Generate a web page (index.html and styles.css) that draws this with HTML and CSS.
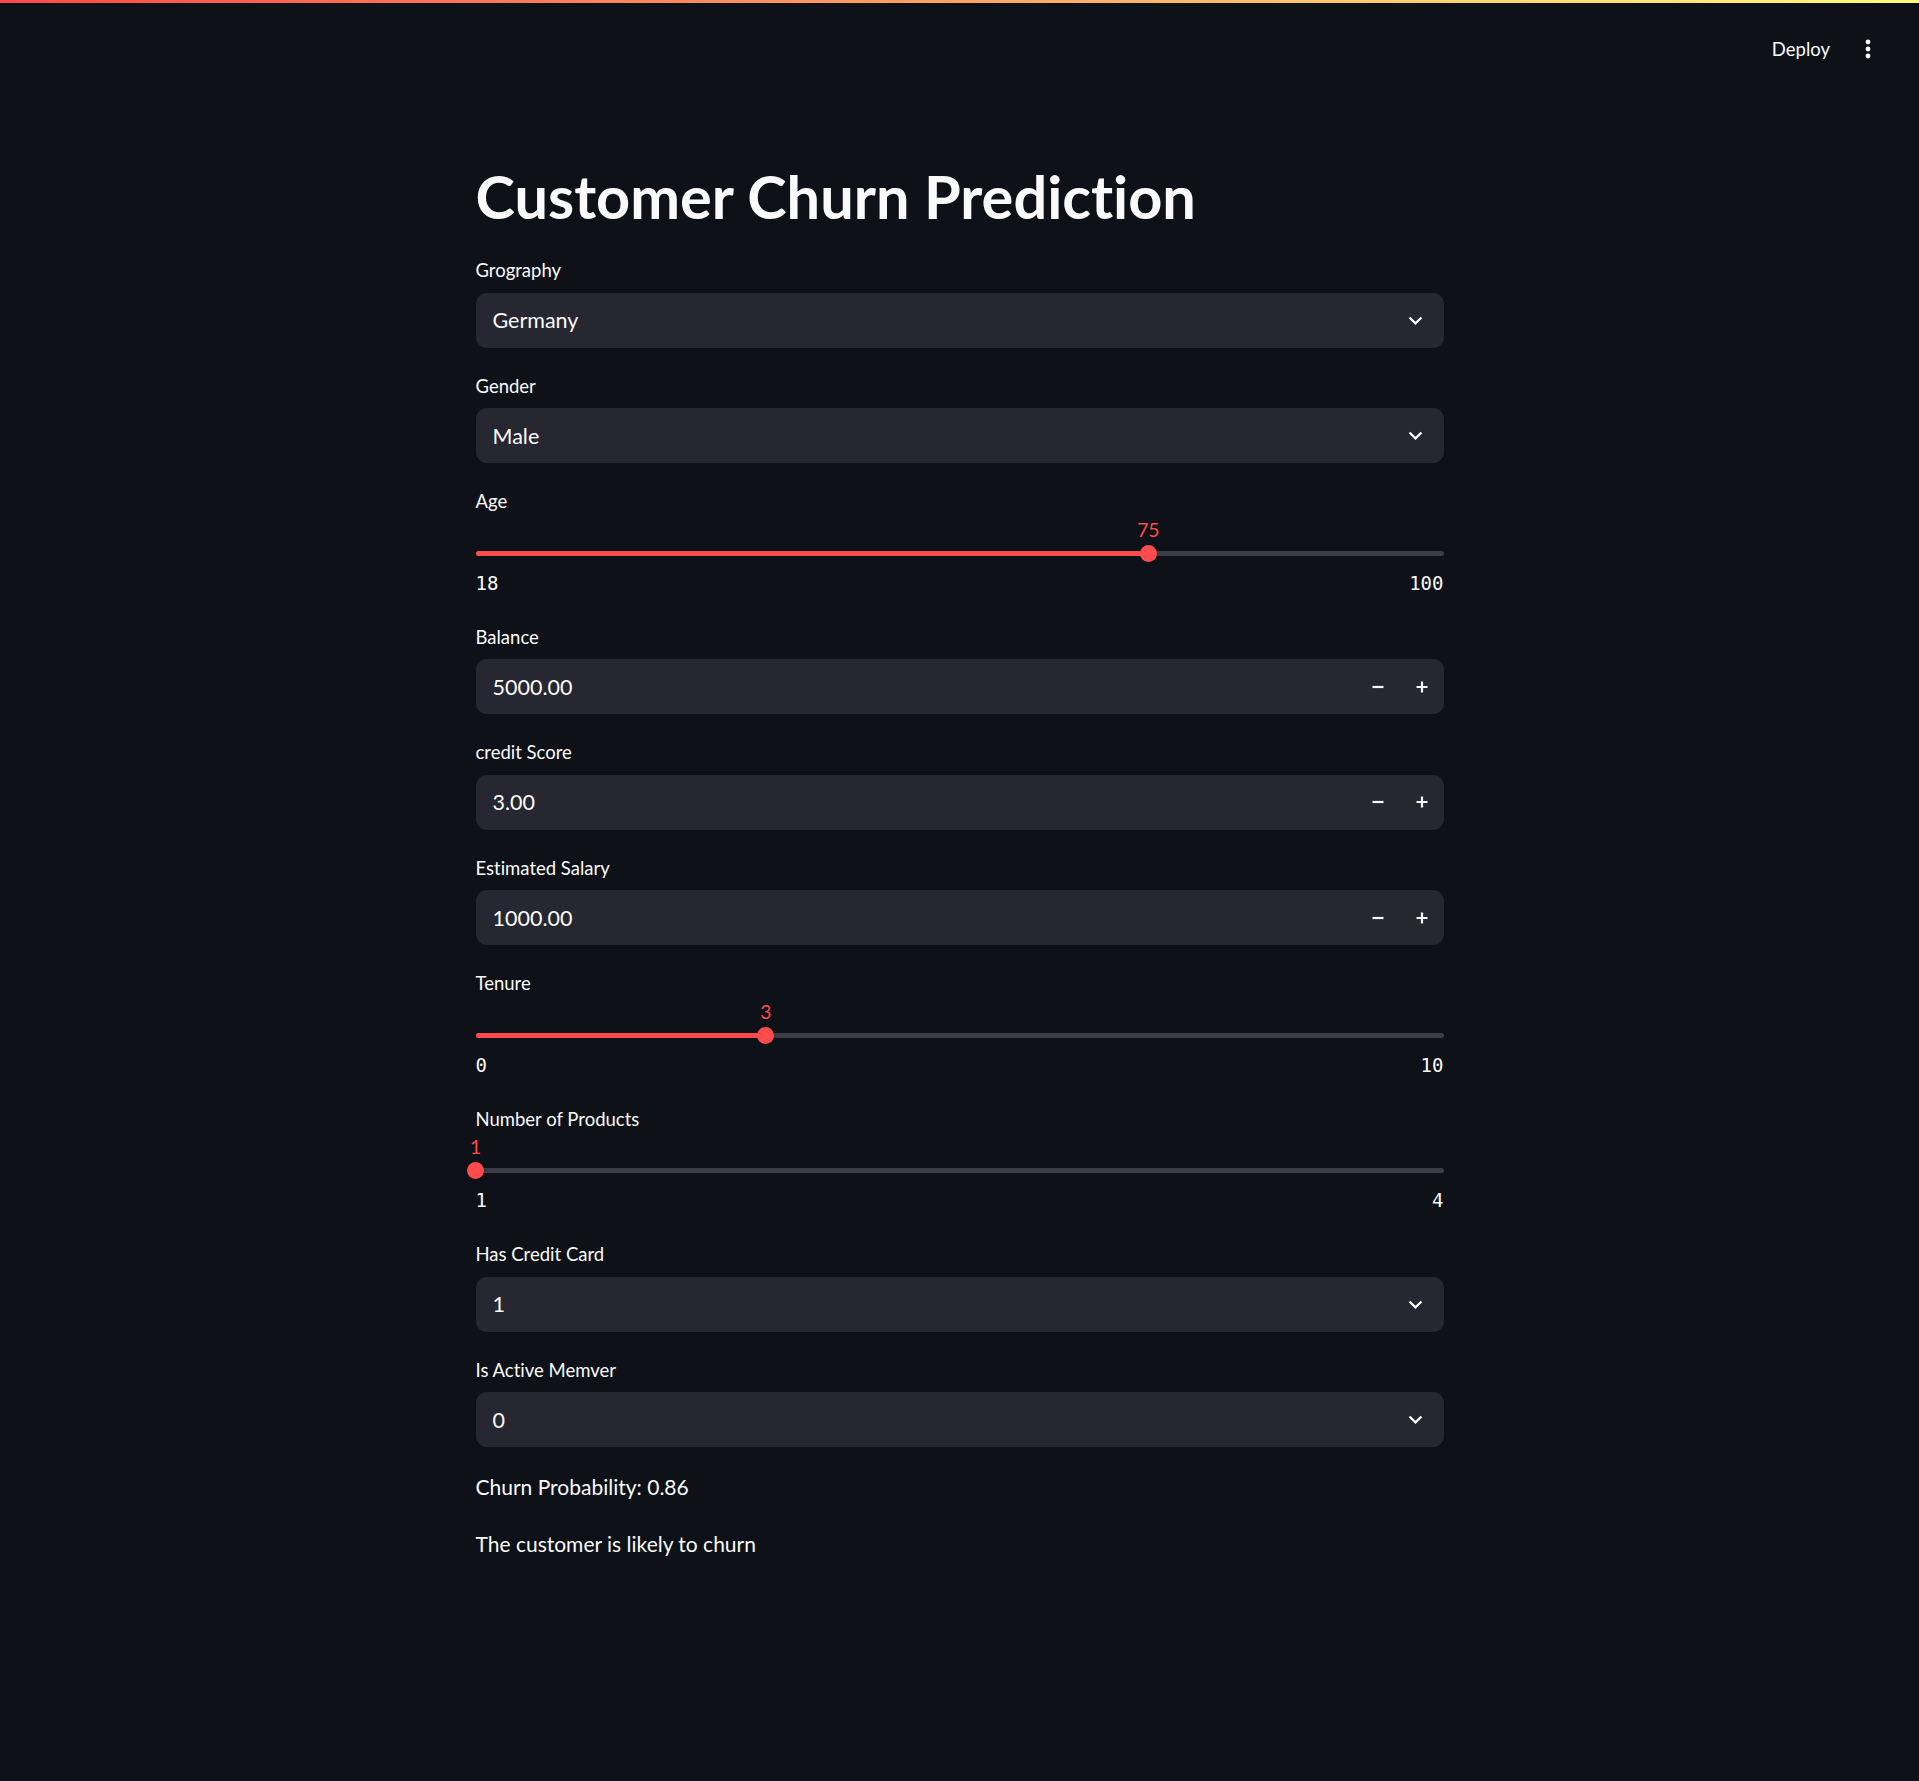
FILE: index.html
```html
<!DOCTYPE html>
<html lang="en">
<head>
<meta charset="utf-8">
<title>Customer Churn Prediction</title>
<link rel="stylesheet" href="styles.css">
</head>
<body>
<div class="decoration"></div>
<header class="header">
  <span class="deploy">Deploy</span>
  <span class="menu">
    <svg width="8" height="22" viewBox="0 0 8 22"><circle cx="4" cy="4" r="2.4" fill="#fafafa"/><circle cx="4" cy="11" r="2.4" fill="#fafafa"/><circle cx="4" cy="18" r="2.4" fill="#fafafa"/></svg>
  </span>
</header>
<main class="main">
  <h1 class="title">Customer Churn Prediction</h1>
  <div class="stack">
    <div class="field">
      <div class="label">Grography</div>
      <div class="box select"><span class="value">Germany</span>
        <svg class="chev" width="27" height="27" viewBox="0 0 24 24"><path d="M16.59 8.59L12 13.17 7.41 8.59 6 10l6 6 6-6z" fill="#fafafa"/></svg></div>
    </div>
    <div class="field">
      <div class="label">Gender</div>
      <div class="box select"><span class="value">Male</span>
        <svg class="chev" width="27" height="27" viewBox="0 0 24 24"><path d="M16.59 8.59L12 13.17 7.41 8.59 6 10l6 6 6-6z" fill="#fafafa"/></svg></div>
    </div>
    <div class="field">
      <div class="label">Age</div>
      <div class="slider">
        <div class="track">
          <div class="fill" style="width:69.51%"></div>
          <div class="thumb" style="left:69.51%"><span class="thumb-value">75</span></div>
        </div>
        <div class="ticks"><span>18</span><span>100</span></div>
      </div>
    </div>
    <div class="field">
      <div class="label">Balance</div>
      <div class="box number"><span class="value">5000.00</span>
        <span class="step"><svg width="12" height="12" viewBox="0 0 12 12"><path d="M0.5 6h11" stroke="#fafafa" stroke-width="2.2"/></svg></span>
        <span class="step"><svg width="12" height="12" viewBox="0 0 12 12"><path d="M0.5 6h11M6 0.5v11" stroke="#fafafa" stroke-width="2.2"/></svg></span>
      </div>
    </div>
    <div class="field">
      <div class="label">credit Score</div>
      <div class="box number"><span class="value">3.00</span>
        <span class="step"><svg width="12" height="12" viewBox="0 0 12 12"><path d="M0.5 6h11" stroke="#fafafa" stroke-width="2.2"/></svg></span>
        <span class="step"><svg width="12" height="12" viewBox="0 0 12 12"><path d="M0.5 6h11M6 0.5v11" stroke="#fafafa" stroke-width="2.2"/></svg></span>
      </div>
    </div>
    <div class="field">
      <div class="label">Estimated Salary</div>
      <div class="box number"><span class="value">1000.00</span>
        <span class="step"><svg width="12" height="12" viewBox="0 0 12 12"><path d="M0.5 6h11" stroke="#fafafa" stroke-width="2.2"/></svg></span>
        <span class="step"><svg width="12" height="12" viewBox="0 0 12 12"><path d="M0.5 6h11M6 0.5v11" stroke="#fafafa" stroke-width="2.2"/></svg></span>
      </div>
    </div>
    <div class="field">
      <div class="label">Tenure</div>
      <div class="slider">
        <div class="track">
          <div class="fill" style="width:30%"></div>
          <div class="thumb" style="left:30%"><span class="thumb-value">3</span></div>
        </div>
        <div class="ticks"><span>0</span><span>10</span></div>
      </div>
    </div>
    <div class="field">
      <div class="label">Number of Products</div>
      <div class="slider">
        <div class="track">
          <div class="fill" style="width:0%"></div>
          <div class="thumb" style="left:0%"><span class="thumb-value">1</span></div>
        </div>
        <div class="ticks"><span>1</span><span>4</span></div>
      </div>
    </div>
    <div class="field">
      <div class="label">Has Credit Card</div>
      <div class="box select"><span class="value">1</span>
        <svg class="chev" width="27" height="27" viewBox="0 0 24 24"><path d="M16.59 8.59L12 13.17 7.41 8.59 6 10l6 6 6-6z" fill="#fafafa"/></svg></div>
    </div>
    <div class="field">
      <div class="label">Is Active Memver</div>
      <div class="box select"><span class="value">0</span>
        <svg class="chev" width="27" height="27" viewBox="0 0 24 24"><path d="M16.59 8.59L12 13.17 7.41 8.59 6 10l6 6 6-6z" fill="#fafafa"/></svg></div>
    </div>
    <p class="text">Churn Probability: 0.86</p>
    <p class="text">The customer is likely to churn</p>
  </div>
</main>
</body>
</html>
```
FILE: styles.css
```css
body {
  margin: 0;
  background: #0e1117;
  color: #fafafa;
  font-family: Lato, "Noto Sans", sans-serif;
  font-variant-ligatures: none;
}
.decoration {
  height: 3px;
  background: linear-gradient(90deg, #ff4b4b, #fffd80);
}
.header {
  height: 92px;
  display: flex;
  justify-content: flex-end;
  align-items: center;
  padding-right: 31px;
}
.deploy {
  font-size: 18.5px;
  margin-right: 18px;
}
.menu {
  width: 40px;
  height: 40px;
  display: flex;
  align-items: center;
  justify-content: center;
}
.main {
  width: 968px;
  margin: 0 auto;
  padding-bottom: 200px;
}
.title {
  font-size: 59.5px;
  font-weight: 700;
  line-height: 72px;
  margin: 65px 0 22px;
}
.stack {
  display: flex;
  flex-direction: column;
  gap: 22px;
}
.field {
  display: flex;
  flex-direction: column;
}
.label {
  font-size: 18.5px;
  height: 33px;
  line-height: 33px;
  margin-bottom: 5.5px;
}
.box {
  height: 55px;
  box-sizing: border-box;
  background: #262730;
  border-radius: 11px;
  display: flex;
  align-items: center;
  padding-left: 17px;
  font-size: 21.5px;
}
.value {
  flex: 1;
}
.select {
  padding-right: 15px;
}
.step {
  width: 44px;
  height: 100%;
  display: flex;
  align-items: center;
  justify-content: center;
}
.slider {
  height: 75px;
  box-sizing: border-box;
  padding-top: 27px;
}
.track {
  position: relative;
  height: 5px;
  border-radius: 3px;
  background: #3b3c45;
}
.fill {
  height: 100%;
  border-radius: 3px;
  background: #ff4b4b;
}
.thumb {
  position: absolute;
  top: 50%;
  width: 17px;
  height: 17px;
  margin: -8.5px 0 0 -8.5px;
  border-radius: 50%;
  background: #ff4b4b;
}
.thumb-value {
  position: absolute;
  left: 50%;
  bottom: 22px;
  transform: translateX(-50%);
  color: #ff4b4b;
  font-size: 19.25px;
  line-height: 20px;
}
.ticks {
  margin-top: 17px;
  display: flex;
  justify-content: space-between;
  font-family: "DejaVu Sans Mono", "Liberation Mono", monospace;
  font-size: 19px;
  line-height: 20px;
}
.text {
  margin: 0;
  font-size: 21px;
  line-height: 35.2px;
}
```
